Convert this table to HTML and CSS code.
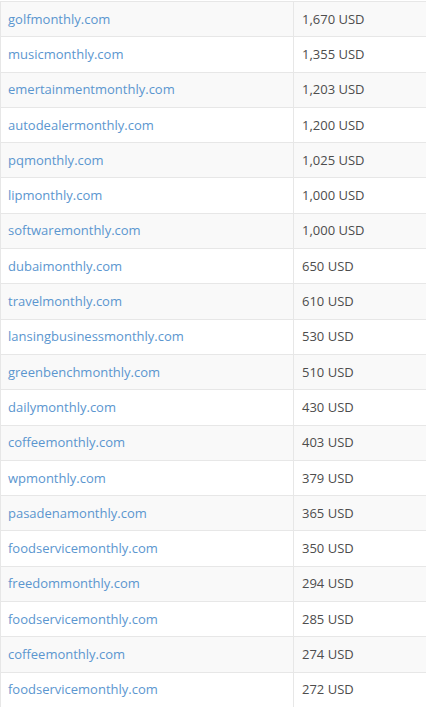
FILE: index.html
```html
<!DOCTYPE html>
<html>
<head>
<meta charset="utf-8">
<link rel="stylesheet" href="styles.css">
</head>
<body>
<div class="table">
  <div class="row"><div class="cell domain"><a href="#">golfmonthly.com</a></div><div class="cell price">1,670 USD</div></div>
  <div class="row"><div class="cell domain"><a href="#">musicmonthly.com</a></div><div class="cell price">1,355 USD</div></div>
  <div class="row"><div class="cell domain"><a href="#">emertainmentmonthly.com</a></div><div class="cell price">1,203 USD</div></div>
  <div class="row"><div class="cell domain"><a href="#">autodealermonthly.com</a></div><div class="cell price">1,200 USD</div></div>
  <div class="row"><div class="cell domain"><a href="#">pqmonthly.com</a></div><div class="cell price">1,025 USD</div></div>
  <div class="row"><div class="cell domain"><a href="#">lipmonthly.com</a></div><div class="cell price">1,000 USD</div></div>
  <div class="row"><div class="cell domain"><a href="#">softwaremonthly.com</a></div><div class="cell price">1,000 USD</div></div>
  <div class="row"><div class="cell domain"><a href="#">dubaimonthly.com</a></div><div class="cell price">650 USD</div></div>
  <div class="row"><div class="cell domain"><a href="#">travelmonthly.com</a></div><div class="cell price">610 USD</div></div>
  <div class="row"><div class="cell domain"><a href="#">lansingbusinessmonthly.com</a></div><div class="cell price">530 USD</div></div>
  <div class="row"><div class="cell domain"><a href="#">greenbenchmonthly.com</a></div><div class="cell price">510 USD</div></div>
  <div class="row"><div class="cell domain"><a href="#">dailymonthly.com</a></div><div class="cell price">430 USD</div></div>
  <div class="row"><div class="cell domain"><a href="#">coffeemonthly.com</a></div><div class="cell price">403 USD</div></div>
  <div class="row"><div class="cell domain"><a href="#">wpmonthly.com</a></div><div class="cell price">379 USD</div></div>
  <div class="row"><div class="cell domain"><a href="#">pasadenamonthly.com</a></div><div class="cell price">365 USD</div></div>
  <div class="row"><div class="cell domain"><a href="#">foodservicemonthly.com</a></div><div class="cell price">350 USD</div></div>
  <div class="row"><div class="cell domain"><a href="#">freedommonthly.com</a></div><div class="cell price">294 USD</div></div>
  <div class="row"><div class="cell domain"><a href="#">foodservicemonthly.com</a></div><div class="cell price">285 USD</div></div>
  <div class="row"><div class="cell domain"><a href="#">coffeemonthly.com</a></div><div class="cell price">274 USD</div></div>
  <div class="row"><div class="cell domain"><a href="#">foodservicemonthly.com</a></div><div class="cell price">272 USD</div></div>
</div>
</body>
</html>
```
FILE: styles.css
```css
html, body {
  margin: 0;
  padding: 0;
  background: #ffffff;
}
body {
  font-family: "Open Sans", "Liberation Sans", sans-serif;
  font-size: 13px;
  color: #4d4d4d;
}
.table {
  margin-top: 1px;
  border-top: 1px solid #e7e7e7;
  border-left: 1px solid #e7e7e7;
  width: 440px;
}
.row {
  display: grid;
  grid-template-columns: 292px 1fr;
  height: 35.3px;
  box-sizing: border-box;
  border-bottom: 1px solid #e7e7e7;
}
.row:nth-child(odd) {
  background: #f9f9f9;
}
.cell {
  display: flex;
  align-items: center;
  padding: 0 7px 1px 7px;
}
.price {
  border-left: 1px solid #e7e7e7;
  padding-left: 8px;
}
.domain a {
  color: #5b96cf;
  text-decoration: none;
}
```
